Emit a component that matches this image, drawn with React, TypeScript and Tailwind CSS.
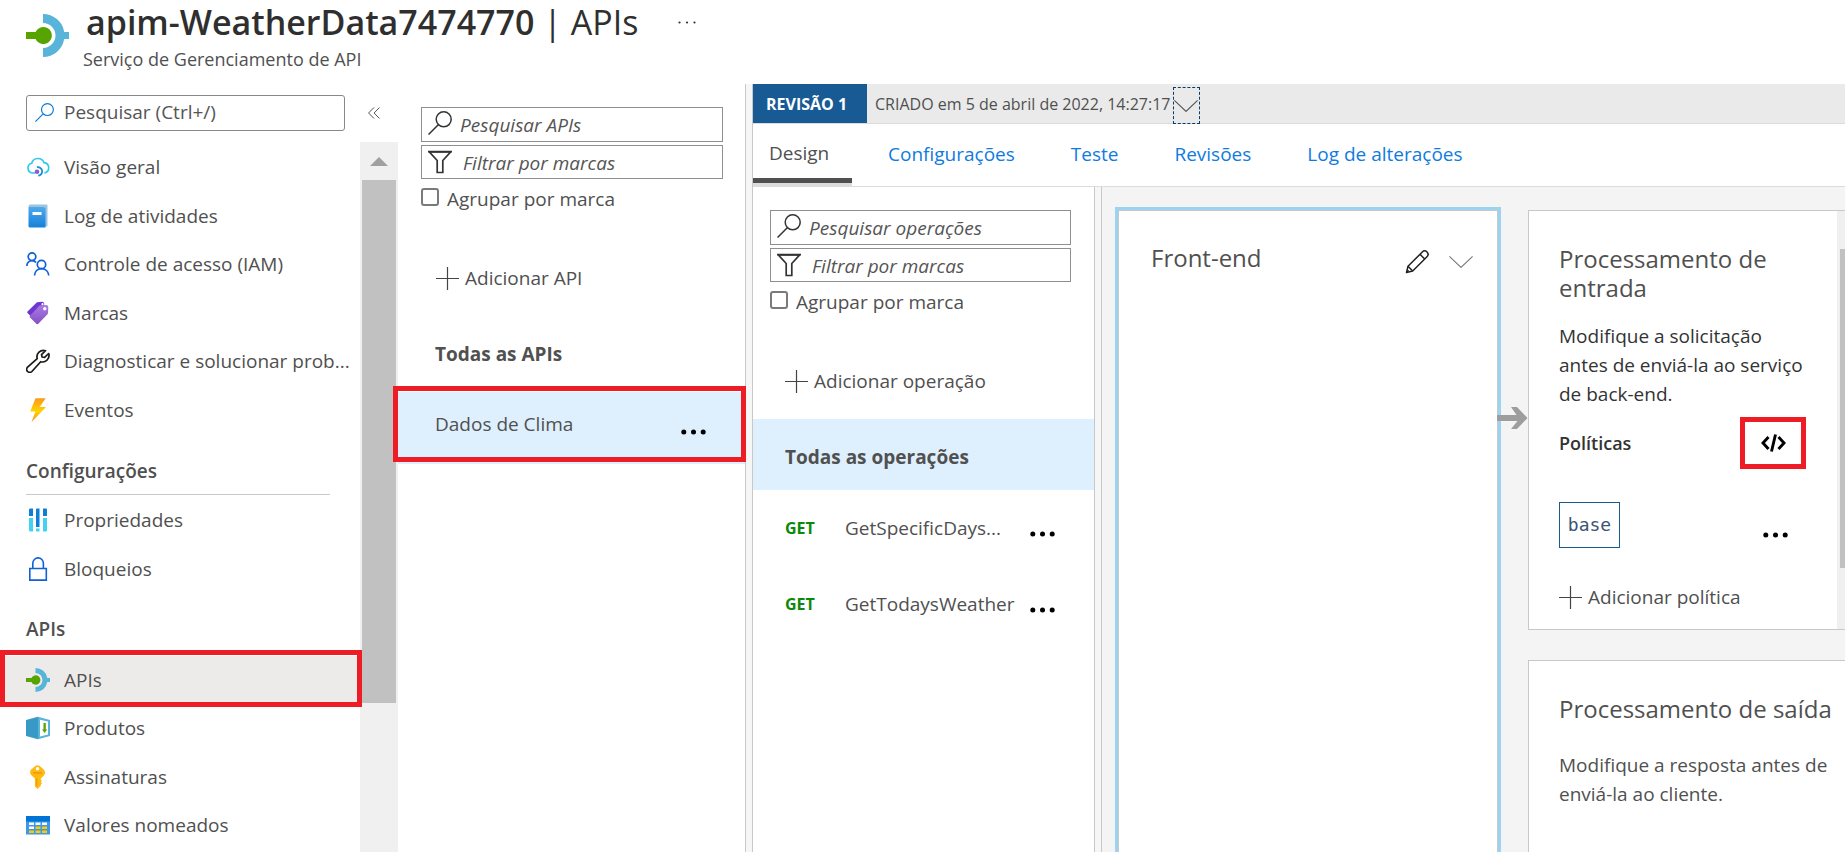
import type { ReactNode } from "react";

type IconProps = { className?: string };

function ApimIcon({ className = "size-6" }: IconProps) {
  return (
    <svg viewBox="0 0 43 43" className={className} aria-hidden="true">
      <path d="M17 0a21.500 21.500 0 0 1 21.200 18H43v7h-4.800A21.500 21.500 0 0 1 17 43v-9a12.500 12.500 0 0 0 0-25z" fill="#59b4d9" />
      <path d="M0 18h9.600a8.500 8.500 0 1 1 0 7H0z" fill="#57a300" />
    </svg>
  );
}

function CloudIcon() {
  return (
    <svg viewBox="0 0 24 24" className="size-6" fill="none" aria-hidden="true">
      <path d="M9 18H6.500a5 5 0 0 1-.8-9.800A6.500 6.500 0 0 1 18 7.600a5.200 5.200 0 0 1 .4 10.300" stroke="#32c8ea" strokeWidth="1.700" />
      <path d="M11 12.200a4.300 4.300 0 1 1 1.200 8.500" stroke="#1490d8" strokeWidth="1.800" />
      <circle cx="11" cy="16.800" r="2.300" fill="#8f5bd0" />
    </svg>
  );
}

function LogIcon() {
  return (
    <svg viewBox="0 0 24 24" className="size-6" aria-hidden="true">
      <defs>
        <linearGradient id="log-cover" x1="0" y1="0" x2="0" y2="1">
          <stop offset="0" stopColor="#4fa8ee" />
          <stop offset="1" stopColor="#1581d8" />
        </linearGradient>
      </defs>
      <path d="M4 .5h16.500q1 0 1 1v20q0 1-1 1H19V3H2.500Q2.500.5 4 .5z" fill="#9cc3e0" />
      <path d="M2.500 3H18q1.500 0 1.500 1.500V23.500H4q-1.500 0-1.500-1.500z" fill="url(#log-cover)" />
      <path d="M6.500 8h9v3h-9z" fill="#fff" />
    </svg>
  );
}

function PeopleIcon() {
  return (
    <svg viewBox="0 0 24 24" className="size-6" fill="none" stroke="#0f62d6" strokeWidth="1.700" aria-hidden="true">
      <circle cx="6" cy="4.700" r="3.800" />
      <path d="M.8 14c.2-3 2.200-5.400 5.200-5.400 1.800 0 3.200.8 4.100 2" />
      <circle cx="15.500" cy="12.500" r="4.200" />
      <path d="M8.500 23.500c.3-4 3-6.800 7-6.800s6.900 2.800 7.300 6.800" />
    </svg>
  );
}

function TagIcon() {
  return (
    <svg viewBox="0 0 24 24" className="size-6" aria-hidden="true">
      <defs>
        <linearGradient id="tag-front" x1="0" y1="0" x2="0" y2="1">
          <stop offset="0" stopColor="#a97be4" />
          <stop offset="1" stopColor="#8650c4" />
        </linearGradient>
      </defs>
      <path d="M11 1.300 16 .7q2 0 2.200 2L18 5 5 15.500 1.500 12q-.6-.8 0-1.500z" fill="#6f37d0" />
      <path d="M13.500 4.500 20 4q2.300 0 2.300 2.300l-.3 5.700q0 .8-.7 1.500l-9 9.200q-1 .9-2 0L4 16.500q-.8-.9 0-1.800z" fill="url(#tag-front)" />
      <circle cx="16.500" cy="3.200" r="1.100" fill="#fff" />
      <circle cx="18.800" cy="7.800" r="1.700" fill="#fff" />
    </svg>
  );
}

function WrenchIcon() {
  return (
    <svg viewBox="0 0 24 24" className="size-6" fill="none" stroke="#1b1a19" strokeWidth="1.700" strokeLinejoin="round" aria-hidden="true">
      <path d="M19.500 1.700A6.500 6.500 0 0 0 11.200 9.600L1.600 18.200a3 3 0 0 0 4.300 4.300l8.800-9.800a6.500 6.500 0 0 0 8-8.200L18.600 8.400l-2.500-.4-.6-2.400z" />
    </svg>
  );
}

function BoltIcon() {
  return (
    <svg viewBox="0 0 24 24" className="size-6" aria-hidden="true">
      <defs>
        <linearGradient id="bolt-fill" x1="0" y1="0" x2="0" y2="1">
          <stop offset="0" stopColor="#fb9a1c" />
          <stop offset=".55" stopColor="#ffd400" />
          <stop offset="1" stopColor="#f98b1c" />
        </linearGradient>
      </defs>
      <path d="M9.500.3h10.200L13.800 9H20L5.600 24l3.800-10.600H4.200z" fill="url(#bolt-fill)" />
    </svg>
  );
}

function PropertiesIcon() {
  return (
    <svg viewBox="0 0 24 24" className="size-6" aria-hidden="true">
      <path d="M3 1.500q0-1 1.500-1H7v7.500H3zM10 1.500q0-1 1-1h2.500V19H10zM17 .5h3.200q.8 0 .8 1V8h-4z" fill="#0f7ed8" />
      <path d="M3 10h4v13.500H4.500Q3 23.500 3 22zM10 20.500h3.500v3H11q-1 0-1-1zM17 10h4v12.500q0 1-1 1h-3z" fill="#42d3f0" />
    </svg>
  );
}

function LockIcon() {
  return (
    <svg viewBox="0 0 24 24" className="size-6" fill="none" stroke="#0f62d6" strokeWidth="1.600" aria-hidden="true">
      <path d="M3.800 11.500h16.500v11.600H3.800z" />
      <path d="M6.800 11.500V6.200a5.300 5.300 0 0 1 10.600 0v5.300" />
    </svg>
  );
}

function ProductIcon() {
  return (
    <svg viewBox="0 0 24 24" className="size-6" aria-hidden="true">
      <path d="M0 4 12 .8V23.300L0 20z" fill="#3999c6" />
      <path d="M12 .8 24 4v16l-12 3.300z" fill="#59b4d9" />
      <path d="M14 3.700 22 5.500v13L14 20.500z" fill="#fff" />
      <path d="M17.500 7h2.300v6.500h1.400L18.600 17 16 13.500h1.500z" fill="#57a300" />
    </svg>
  );
}

function KeyIcon() {
  return (
    <svg viewBox="0 0 24 24" className="size-6" aria-hidden="true">
      <path d="M11.500.3q1.500 0 2.600 1L18.200 5q1.800 2.500 0 5l-3.400 3.500v1.300l1.200 1-1.200 1.200 1.200 1.200-1.200 1.200v1.300L11.500 24l-2.600-2.500v-8L4.800 9.700q-1.700-2.500 0-4.900l4.100-3.500q1.100-1 2.600-1z" fill="#ffb910" />
      <path d="M7 7.200h8.800v1.400H7zM10.300 13.500h1v7.300h-1z" fill="#e8920c" />
      <circle cx="11.500" cy="3.700" r="1.800" fill="#fff" />
    </svg>
  );
}

function TableIcon() {
  return (
    <svg viewBox="0 0 24 24" className="size-6" aria-hidden="true">
      <path d="M0 3h24v18.500H0z" fill="#3d97ea" />
      <path d="M0 3h24v5.500H0z" fill="#0074d4" />
      <path d="M3 9.500h5V12H3zM9.500 9.500h5V12h-5zM16 9.500h5V12h-5zM3 13.500h5V16H3z" fill="#fff" />
      <path d="M9.500 13.500h5V16h-5zM16 13.500h5V16h-5zM9.500 17.500h5V20h-5zM16 17.500h5V20h-5zM3 17.500h5V20H3z" fill="#ffca00" />
    </svg>
  );
}

function SearchIcon({ className = "" }: IconProps) {
  return (
    <svg viewBox="0 0 24 24" className={`shrink-0 ${className}`} fill="none" stroke="currentColor" strokeWidth="1.500" aria-hidden="true">
      <circle cx="15.700" cy="8.300" r="7.500" />
      <path d="M10.300 13.700.5 23.500" />
    </svg>
  );
}

function FilterIcon() {
  return (
    <svg viewBox="0 0 24 24" className="size-6" fill="none" stroke="#333" strokeWidth="1.700" aria-hidden="true">
      <path d="M1 1.500h22l-8.200 9v12H9.200v-12z" />
      <path d="M.5 2h23" />
    </svg>
  );
}

function PlusIcon() {
  return (
    <svg viewBox="0 0 23 23" className="size-[23px]" stroke="#444" strokeWidth="1.200" aria-hidden="true">
      <path d="M11.500 0v23M0 11.500h23" />
    </svg>
  );
}

function DotsIcon() {
  return (
    <svg viewBox="0 0 25 6" className="h-[6px] w-[25px]" fill="#000" aria-hidden="true">
      <circle cx="2.800" cy="3" r="2.500" />
      <circle cx="12.500" cy="3" r="2.500" />
      <circle cx="22.200" cy="3" r="2.500" />
    </svg>
  );
}

function ChevronIcon({ className = "" }: IconProps) {
  return (
    <svg viewBox="0 0 24 12" className={`h-3 w-6 ${className}`} fill="none" stroke="currentColor" strokeWidth="1.100" aria-hidden="true">
      <path d="M.4.4 12 11.400 23.600.4" />
    </svg>
  );
}

function PencilIcon() {
  return (
    <svg viewBox="0 0 24 24" className="size-6" fill="none" stroke="#222" strokeWidth="1.500" strokeLinejoin="round" aria-hidden="true">
      <path d="M1.500 22.500 3 16.300 17.300 2a3.200 3.200 0 0 1 4.700 4.700L7.700 21z" />
      <path d="M3 16.300 7.700 21M15 4.300 19.700 9M1.500 22.500l2-2.200" />
    </svg>
  );
}

function CodeIcon() {
  return (
    <svg viewBox="0 0 25 18" className="h-[18px] w-[25px]" fill="none" stroke="#000" strokeWidth="2.900" aria-hidden="true">
      <path d="M7.500 3 2 9l5.500 6M17.500 3 23 9l-5.500 6" />
      <path d="M14.500.5 10.500 17.500" />
    </svg>
  );
}

function Highlight({ className }: { className: string }) {
  return <span aria-hidden="true" className={`pointer-events-none absolute z-10 border-5 border-[#ee1c25] ${className}`} />;
}

type Item = { label: string; icon: ReactNode; selected?: boolean };

const general: Item[] = [
  { label: "Visão geral", icon: <CloudIcon /> },
  { label: "Log de atividades", icon: <LogIcon /> },
  { label: "Controle de acesso (IAM)", icon: <PeopleIcon /> },
  { label: "Marcas", icon: <TagIcon /> },
  { label: "Diagnosticar e solucionar prob...", icon: <WrenchIcon /> },
  { label: "Eventos", icon: <BoltIcon /> },
];

const settings: Item[] = [
  { label: "Propriedades", icon: <PropertiesIcon /> },
  { label: "Bloqueios", icon: <LockIcon /> },
];

const apis: Item[] = [
  { label: "APIs", icon: <ApimIcon />, selected: true },
  { label: "Produtos", icon: <ProductIcon /> },
  { label: "Assinaturas", icon: <KeyIcon /> },
  { label: "Valores nomeados", icon: <TableIcon /> },
];

function MenuList({ items, className }: { items: Item[]; className: string }) {
  return (
    <ul className={`grid auto-rows-fr ${className}`}>
      {items.map((item) => (
        <li key={item.label} className="relative">
          <a href="#" className={`flex h-full items-center gap-[14px] pl-[26px] whitespace-nowrap ${item.selected ? "bg-[#edebe9]" : ""}`}>
            {item.icon}
            <span>{item.label}</span>
          </a>
          {item.selected && <Highlight className="-top-[6px] -right-[2px] -bottom-[3px] left-0" />}
        </li>
      ))}
    </ul>
  );
}

function Sidebar() {
  return (
    <aside className="flex w-[398px] shrink-0 flex-col">
      <div className="flex h-[58px] shrink-0 items-center pl-[26px]">
        <label className="flex h-9 w-[319px] items-center gap-[10px] rounded-[3px] border border-[#8a8886] pb-[2px] pl-2">
          <SearchIcon className="size-[19px] text-[#0f7ad8]" />
          <input aria-label="Pesquisar" placeholder="Pesquisar (Ctrl+/)" className="min-w-0 flex-1 outline-none placeholder:text-[#555]" />
        </label>
        <button aria-label="Recolher menu" className="ml-[23px]">
          <svg viewBox="0 0 12 12" className="size-3" fill="none" stroke="#555" strokeWidth="1" aria-hidden="true">
            <path d="M6 .5.6 6 6 11.500M11.500.5 6.100 6l5.400 5.500" />
          </svg>
        </button>
      </div>
      <div className="flex min-h-0 flex-1">
        <nav className="w-[360px] shrink-0 pt-[1px]">
          <MenuList items={general} className="h-[291px]" />
          <h2 className="mr-[30px] ml-[26px] flex h-[61px] items-center border-b border-[#c8c8c8] pt-[14px] font-semibold">Configurações</h2>
          <MenuList items={settings} className="h-[98px]" />
          <h2 className="flex h-[63px] items-center pt-[9px] pl-[26px] font-semibold">APIs</h2>
          <MenuList items={apis} className="h-[193px]" />
        </nav>
        <div aria-hidden="true" className="flex flex-1 flex-col items-center bg-[#f0f0f0]">
          <svg viewBox="0 0 18 9" className="mt-[15px] h-[9px] w-[18px]" fill="#a0a0a0">
            <path d="M9 0 18 9H0z" />
          </svg>
          <div className="mt-[14px] h-[523px] w-[34px] bg-[#c1c1c1]" />
        </div>
      </div>
    </aside>
  );
}

function ListFilters({ searchLabel }: { searchLabel: string }) {
  return (
    <div className="flex flex-col gap-[3px]">
      <label className="flex h-[35px] items-center gap-2 border border-[#8f8f8f] pl-[6px] text-[#333]">
        <SearchIcon className="-mt-1 size-6" />
        <input aria-label={searchLabel} placeholder={searchLabel} className="min-w-0 flex-1 italic outline-none placeholder:text-[#555]" />
      </label>
      <label className="flex h-[34px] items-center gap-[11px] border border-[#8f8f8f] pl-[6px]">
        <FilterIcon />
        <input aria-label="Filtrar por marcas" placeholder="Filtrar por marcas" className="min-w-0 flex-1 pt-[1px] italic outline-none placeholder:text-[#555]" />
      </label>
      <label className="flex h-[34px] items-center gap-2">
        <input type="checkbox" className="mb-1 size-[18px] appearance-none rounded-[3px] border-2 border-[#7a7a7a] bg-white" />
        Agrupar por marca
      </label>
    </div>
  );
}

function AddButton({ children }: { children: ReactNode }) {
  return (
    <button className="flex items-center gap-[6px] text-left whitespace-nowrap">
      <PlusIcon />
      <span>{children}</span>
    </button>
  );
}

function ApiPanel() {
  return (
    <section className="w-[348px] shrink-0 border-r border-[#c8c8c8] pt-[23px]">
      <div className="pr-[22px] pl-[23px]">
        <ListFilters searchLabel="Pesquisar APIs" />
      </div>
      <div className="mt-[50px] pl-[38px]">
        <AddButton>Adicionar API</AddButton>
      </div>
      <div className="flex h-[102px] items-center pt-[26px] pl-[37px] font-bold">Todas as APIs</div>
      <div className="relative flex h-[72px] items-center justify-between bg-[#deeffd] pr-[39px] pl-[37px]">
        <a href="#" className="-mt-2">Dados de Clima</a>
        <button aria-label="Mais opções" className="mt-2"><DotsIcon /></button>
        <Highlight className="-top-[6px] -right-[1px] bottom-[2px] -left-[5px]" />
      </div>
    </section>
  );
}

const operations = ["GetSpecificDays...", "GetTodaysWeather"];

function OperationsPanel() {
  return (
    <section className="w-[342px] shrink-0 border-r border-[#c8c8c8] pt-[23px]">
      <div className="pr-[23px] pl-[17px]">
        <ListFilters searchLabel="Pesquisar operações" />
      </div>
      <div className="mt-[50px] pl-8">
        <AddButton>Adicionar operação</AddButton>
      </div>
      <a href="#" className="mt-[26px] flex h-[71px] items-center bg-[#deeffd] pt-1 pl-8 font-bold">Todas as operações</a>
      <ul>
        {operations.map((name) => (
          <li key={name} className="flex h-[76px] items-center pr-[39px] pl-8">
            <span className="w-[60px] text-[16px] font-bold text-[#0a8a0a]">GET</span>
            <a href="#" className="flex-1 whitespace-nowrap">{name}</a>
            <button aria-label="Mais opções" className="mt-3"><DotsIcon /></button>
          </li>
        ))}
      </ul>
    </section>
  );
}

function Splitter() {
  return <div aria-hidden="true" className="w-[7px] shrink-0 border-r border-[#c8c8c8] bg-[#f6f6f6]" />;
}

function DesignCanvas() {
  return (
    <section className="flex min-w-0 flex-1 bg-[#f4f4f4] pt-5 pl-[13px]">
      <article className="relative min-w-0 flex-1 border-3 border-b-0 border-[#9ad4f0]">
        <div className="flex h-full items-start justify-between border border-b-0 border-[#c8c8c8] bg-white pt-8 pr-6 pl-8">
          <h2 className="text-[24px] leading-[29px]">Front-end</h2>
          <div className="flex items-center gap-5 pt-[7px]">
            <button aria-label="Editar"><PencilIcon /></button>
            <button aria-label="Expandir" className="text-[#777]"><ChevronIcon /></button>
          </div>
        </div>
        <svg viewBox="0 0 31 22" className="absolute top-[197px] -right-[30px] h-[22px] w-[31px]" aria-hidden="true">
          <path d="M0 8h19.500L14 0h6l10.500 11L20 22h-6l6.500-8H0z" fill="#9d9d9d" />
        </svg>
      </article>
      <div className="ml-[27px] flex w-[317px] shrink-0 flex-col pt-[3px]">
        <article className="flex h-[420px] shrink-0 border border-r-0 border-[#c8c8c8] bg-white">
          <div className="flex-1 pt-[33px] pl-[30px]">
            <h2 className="pr-10 text-[24px] leading-[29px]">Processamento de entrada</h2>
            <p className="mt-5 leading-[29px] whitespace-nowrap text-[#333]">
              Modifique a solicitação
              <br />
              antes de enviá-la ao serviço
              <br />
              de back-end.
            </p>
            <div className="mt-2 flex h-[52px] items-center justify-between pr-[31px] text-[18px] font-semibold text-[#333]">
              Políticas
              <button aria-label="Editor de código" className="flex h-[52px] w-[66px] items-center justify-center border-5 border-[#ee1c25]"><CodeIcon /></button>
            </div>
            <div className="mt-[33px] flex items-center justify-between pr-[49px]">
              <span className="flex h-[46px] w-[61px] items-center justify-center border border-[#185a94] font-['DejaVu_Sans_Mono',monospace] text-[18px] text-[#3a5575]">base</span>
              <button aria-label="Mais opções" className="mt-5"><DotsIcon /></button>
            </div>
            <div className="mt-[37px]">
              <AddButton>Adicionar política</AddButton>
            </div>
          </div>
          <div aria-hidden="true" className="w-2 bg-[#f0f0f0] pt-[38px] pl-[3px]">
            <div className="h-[319px] bg-[#c1c1c1]" />
          </div>
        </article>
        <article className="mt-[30px] flex-1 border border-r-0 border-b-0 border-[#c8c8c8] bg-white pt-[33px] pl-[30px]">
          <h2 className="text-[24px] leading-[29px] whitespace-nowrap">Processamento de saída</h2>
          <p className="mt-7 leading-[29px] whitespace-nowrap">
            Modifique a resposta antes de
            <br />
            enviá-la ao cliente.
          </p>
        </article>
      </div>
    </section>
  );
}

const tabs = ["Configurações", "Teste", "Revisões", "Log de alterações"];

export default function App() {
  return (
    <div className="flex h-screen flex-col overflow-hidden bg-white font-['Open_Sans','Noto_Sans',sans-serif] text-[19px] leading-6 text-[#505050]">
      <header className="flex h-[84px] shrink-0 items-start pl-[26px]">
        <ApimIcon className="mt-[14px] size-[43px]" />
        <div className="ml-[14px]">
          <div className="flex items-center">
            <h1 className="pl-[3px] text-[34px] leading-[45px] whitespace-nowrap text-[#2f2f2f]">
              <span className="font-semibold">apim-WeatherData7474770</span> | APIs
            </h1>
            <button aria-label="Mais" className="ml-10">
              <svg viewBox="0 0 18 3" className="h-[3px] w-[18px]" fill="#333" aria-hidden="true">
                <circle cx="1.500" cy="1.500" r="1.100" />
                <circle cx="9" cy="1.500" r="1.100" />
                <circle cx="16.500" cy="1.500" r="1.100" />
              </svg>
            </button>
          </div>
          <p className="pt-[2px] text-[18px]">Serviço de Gerenciamento de API</p>
        </div>
      </header>
      <div className="flex min-h-0 flex-1">
        <Sidebar />
        <ApiPanel />
        <Splitter />
        <main className="flex min-w-0 flex-1 flex-col">
          <div className="flex h-10 shrink-0 items-stretch border-b border-[#dcdcdc] bg-[#eaeaea] text-[16px]">
            <div className="flex w-[114px] items-center pl-[13px] bg-[#185a94] font-bold text-white">REVISÃO 1</div>
            <div className="flex items-center pl-2 whitespace-nowrap">CRIADO em 5 de abril de 2022, 14:27:17</div>
            <button aria-label="Revisões disponíveis" className="mt-[3px] -mb-[1px] ml-[2px] flex w-[27px] items-center justify-center border border-dashed border-[#0a3a66]">
              <ChevronIcon />
            </button>
          </div>
          <nav className="flex h-[63px] shrink-0 items-stretch gap-9 border-b border-[#dcdcdc] text-[#0f7be0]">
            <a href="#" className="flex w-[99px] flex-col border-b-3 border-[#dcdcdc] text-[#505050]">
              <span className="flex flex-1 items-center border-b-5 border-[#505050] pt-1 pl-4">Design</span>
            </a>
            <div className="flex items-center gap-14 pb-[2px]">
              {tabs.map((tab) => (
                <a key={tab} href="#" className="whitespace-nowrap">{tab}</a>
              ))}
            </div>
          </nav>
          <div className="flex min-h-0 flex-1">
            <OperationsPanel />
            <Splitter />
            <DesignCanvas />
          </div>
        </main>
      </div>
    </div>
  );
}
